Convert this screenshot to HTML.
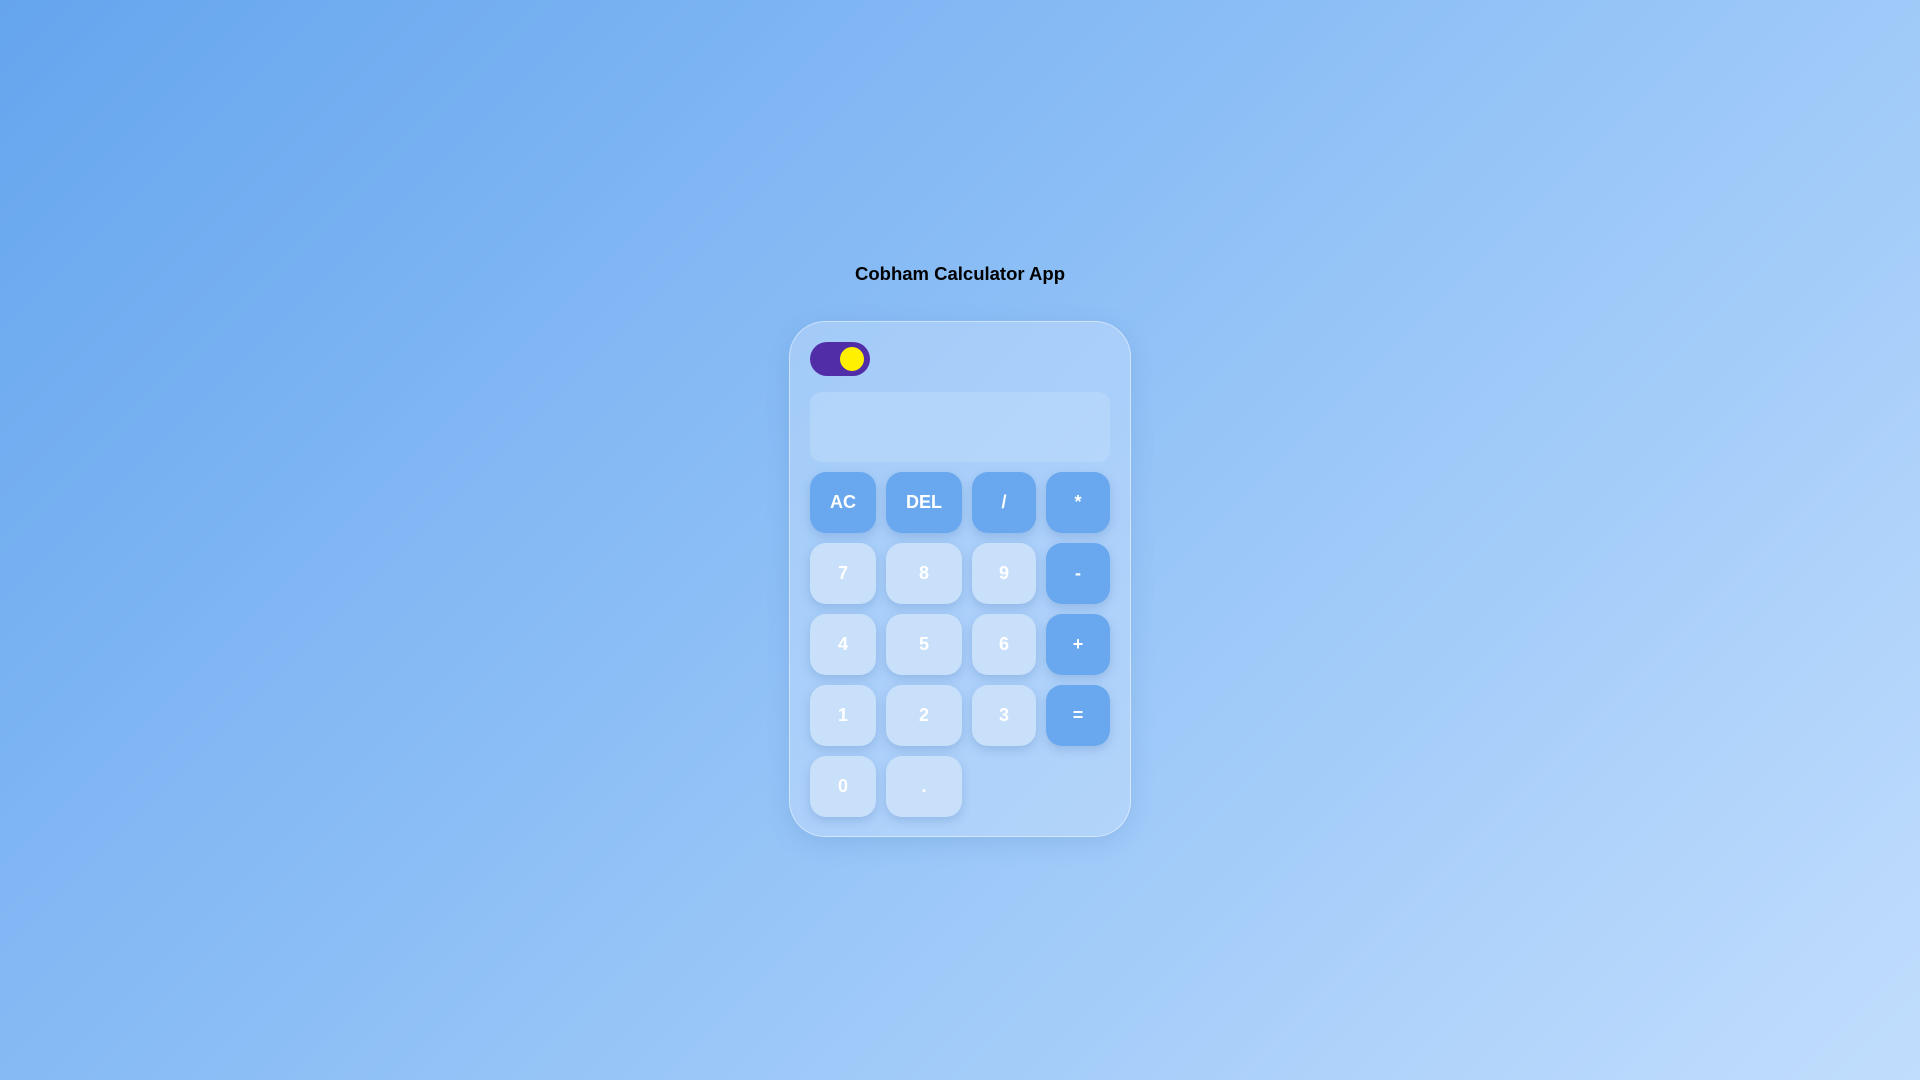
<!DOCTYPE html>
<html><head><meta charset="utf-8"><style>
html,body{margin:0;padding:0;width:1920px;height:1080px;overflow:hidden}
body{background:linear-gradient(135deg,#65a5ee 0%,#8dbff6 45%,#c1ddfd 100%);font-family:"Liberation Sans",Arial,sans-serif;position:relative}
h1{position:absolute;left:0;width:1920px;top:262px;margin:0;text-align:center;font-size:18.5px;font-weight:bold;color:#000;line-height:24px;font-family:"Liberation Sans",sans-serif}
.card{position:absolute;left:789px;top:321px;width:340px;height:514px;border-radius:36px;background:rgba(200,225,252,0.45);border:1px solid rgba(255,255,255,0.45);box-shadow:0 6px 24px rgba(60,110,180,0.18)}
.tog{position:absolute;left:810px;top:342px;width:60px;height:34px;border-radius:17px;background:#512da8}
.knob{position:absolute;left:30px;top:5px;width:24px;height:24px;border-radius:50%;background:#fff000}
.disp{position:absolute;left:810px;top:392px;width:300px;height:70px;border-radius:12px;background:rgba(200,225,252,0.38)}
.b{position:absolute;height:61px;border-radius:16px;color:#fff;font-weight:bold;font-size:18px;display:flex;align-items:center;justify-content:center;box-shadow:0 4px 10px rgba(60,100,170,0.22)}
.d{background:#69a8ee}.l{background:#c8e0f9}
</style></head><body>
<h1>Cobham Calculator App</h1>
<div class="card"></div>
<div class="tog"><div class="knob"></div></div>
<div class="disp"></div>
<div class="b d" style="left:810px;top:472px;width:66px">AC</div>
<div class="b d" style="left:886px;top:472px;width:76px">DEL</div>
<div class="b d" style="left:972px;top:472px;width:64px">/</div>
<div class="b d" style="left:1046px;top:472px;width:64px">*</div>
<div class="b l" style="left:810px;top:543px;width:66px">7</div>
<div class="b l" style="left:886px;top:543px;width:76px">8</div>
<div class="b l" style="left:972px;top:543px;width:64px">9</div>
<div class="b d" style="left:1046px;top:543px;width:64px">-</div>
<div class="b l" style="left:810px;top:614px;width:66px">4</div>
<div class="b l" style="left:886px;top:614px;width:76px">5</div>
<div class="b l" style="left:972px;top:614px;width:64px">6</div>
<div class="b d" style="left:1046px;top:614px;width:64px">+</div>
<div class="b l" style="left:810px;top:685px;width:66px">1</div>
<div class="b l" style="left:886px;top:685px;width:76px">2</div>
<div class="b l" style="left:972px;top:685px;width:64px">3</div>
<div class="b d" style="left:1046px;top:685px;width:64px">=</div>
<div class="b l" style="left:810px;top:756px;width:66px">0</div>
<div class="b l" style="left:886px;top:756px;width:76px">.</div>
</body></html>
